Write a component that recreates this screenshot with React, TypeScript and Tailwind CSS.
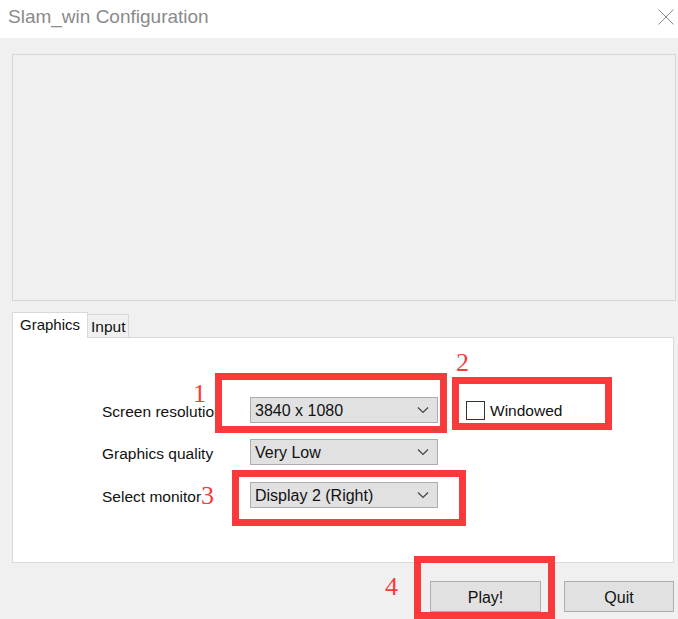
import React from 'react';

const options = [
  { label: 'Screen resolution', value: '3840 x 1080' },
  { label: 'Graphics quality', value: 'Very Low' },
  { label: 'Select monitor', value: 'Display 2 (Right)' },
];

function Chevron() {
  return (
    <svg width="12" height="8" viewBox="0 0 12 8" className="shrink-0">
      <polyline points="1,1.5 6,6.5 11,1.5" fill="none" stroke="#444" strokeWidth="1.2" />
    </svg>
  );
}

function Dropdown({ value }: { value: string }) {
  return (
    <div className="flex h-[26px] w-[188px] items-center justify-between border border-[#adadad] bg-[#e1e1e1] pl-[4px] pr-[8px] text-[16px] text-[#111]">
      <span className="pt-[2px]">{value}</span>
      <Chevron />
    </div>
  );
}

function RedBox({ className }: { className: string }) {
  return <div className={`absolute border-[7px] border-[#f83a3a] ${className}`} />;
}

function Mark({ n, className }: { n: string; className: string }) {
  return (
    <span className={`absolute font-['Liberation_Serif',serif] text-[26px] leading-none text-[#f83a3a] ${className}`}>
      {n}
    </span>
  );
}

export default function App() {
  return (
    <div className="relative h-[619px] w-[678px] overflow-hidden bg-[#f0f0f0] font-['Liberation_Sans',Arial,sans-serif]">
      {/* title bar */}
      <div className="flex h-[38px] items-center justify-between bg-white pb-[4px] pl-[8px] pr-[4px]">
        <span className="text-[19px] text-[#8a8a8a]">Slam_win Configuration</span>
        <svg width="16" height="16" viewBox="0 0 16 16">
          <path d="M0.5 0.5 L15.5 15.5 M15.5 0.5 L0.5 15.5" stroke="#8a8a8a" strokeWidth="1" />
        </svg>
      </div>

      {/* banner area */}
      <div className="ml-3 mr-[2px] mt-4 h-[247px] border border-[#d6d6d6] bg-[#f0f0f0]" />

      {/* tabs */}
      <div className="relative z-10 ml-3 mt-[11px] flex items-end">
        <div className="-mb-px flex h-[26px] w-[76px] items-center border border-b-0 border-[#d9d9d9] bg-white pl-[7px] text-[15px] text-[#111]">
          Graphics
        </div>
        <div className="flex h-[23px] w-[41px] items-center border border-b-0 border-l-0 border-[#d9d9d9] bg-[#f0f0f0] pl-[3px] pt-[2px] text-[15.5px] text-[#111]">
          Input
        </div>
      </div>

      <div className="ml-3 mr-[4px] h-[226px] border border-[#d9d9d9] bg-white pl-[89px] pt-[59px]">
        <div className="flex flex-col gap-[16px]">
          {options.map((o, i) => (
            <div key={o.label} className="flex items-center">
              <span className="w-[148px] pt-[3px] text-[15.5px] text-[#111]">{o.label}</span>
              <Dropdown value={o.value} />
              {i === 0 && (
                <div className="ml-[28px] flex items-center">
                  <div className="h-[19px] w-[19px] border border-[#333] bg-white" />
                  <span className="ml-[5px] text-[15.5px] text-[#111]">Windowed</span>
                </div>
              )}
            </div>
          ))}
        </div>
      </div>

      {/* buttons */}
      <div className="mr-[4px] mt-[18px] flex justify-end gap-[23px]">
        <button className="h-[31px] w-[111px] border border-[#adadad] bg-[#e1e1e1] pt-[2px] text-[16px] text-[#111]">Play!</button>
        <button className="h-[31px] w-[110px] border border-[#adadad] bg-[#e1e1e1] pt-[2px] text-[16px] text-[#111]">Quit</button>
      </div>

      {/* annotations */}
      <RedBox className="left-[215px] top-[373px] h-[60px] w-[232px]" />
      <RedBox className="left-[452px] top-[377px] h-[53px] w-[160px]" />
      <RedBox className="left-[232px] top-[470px] h-[56px] w-[234px]" />
      <RedBox className="left-[414px] top-[556px] h-[63px] w-[141px]" />
      <Mark n="1" className="left-[193px] top-[381px]" />
      <Mark n="2" className="left-[456px] top-[350px]" />
      <Mark n="3" className="left-[201px] top-[483px]" />
      <Mark n="4" className="left-[385px] top-[574px]" />
    </div>
  );
}
